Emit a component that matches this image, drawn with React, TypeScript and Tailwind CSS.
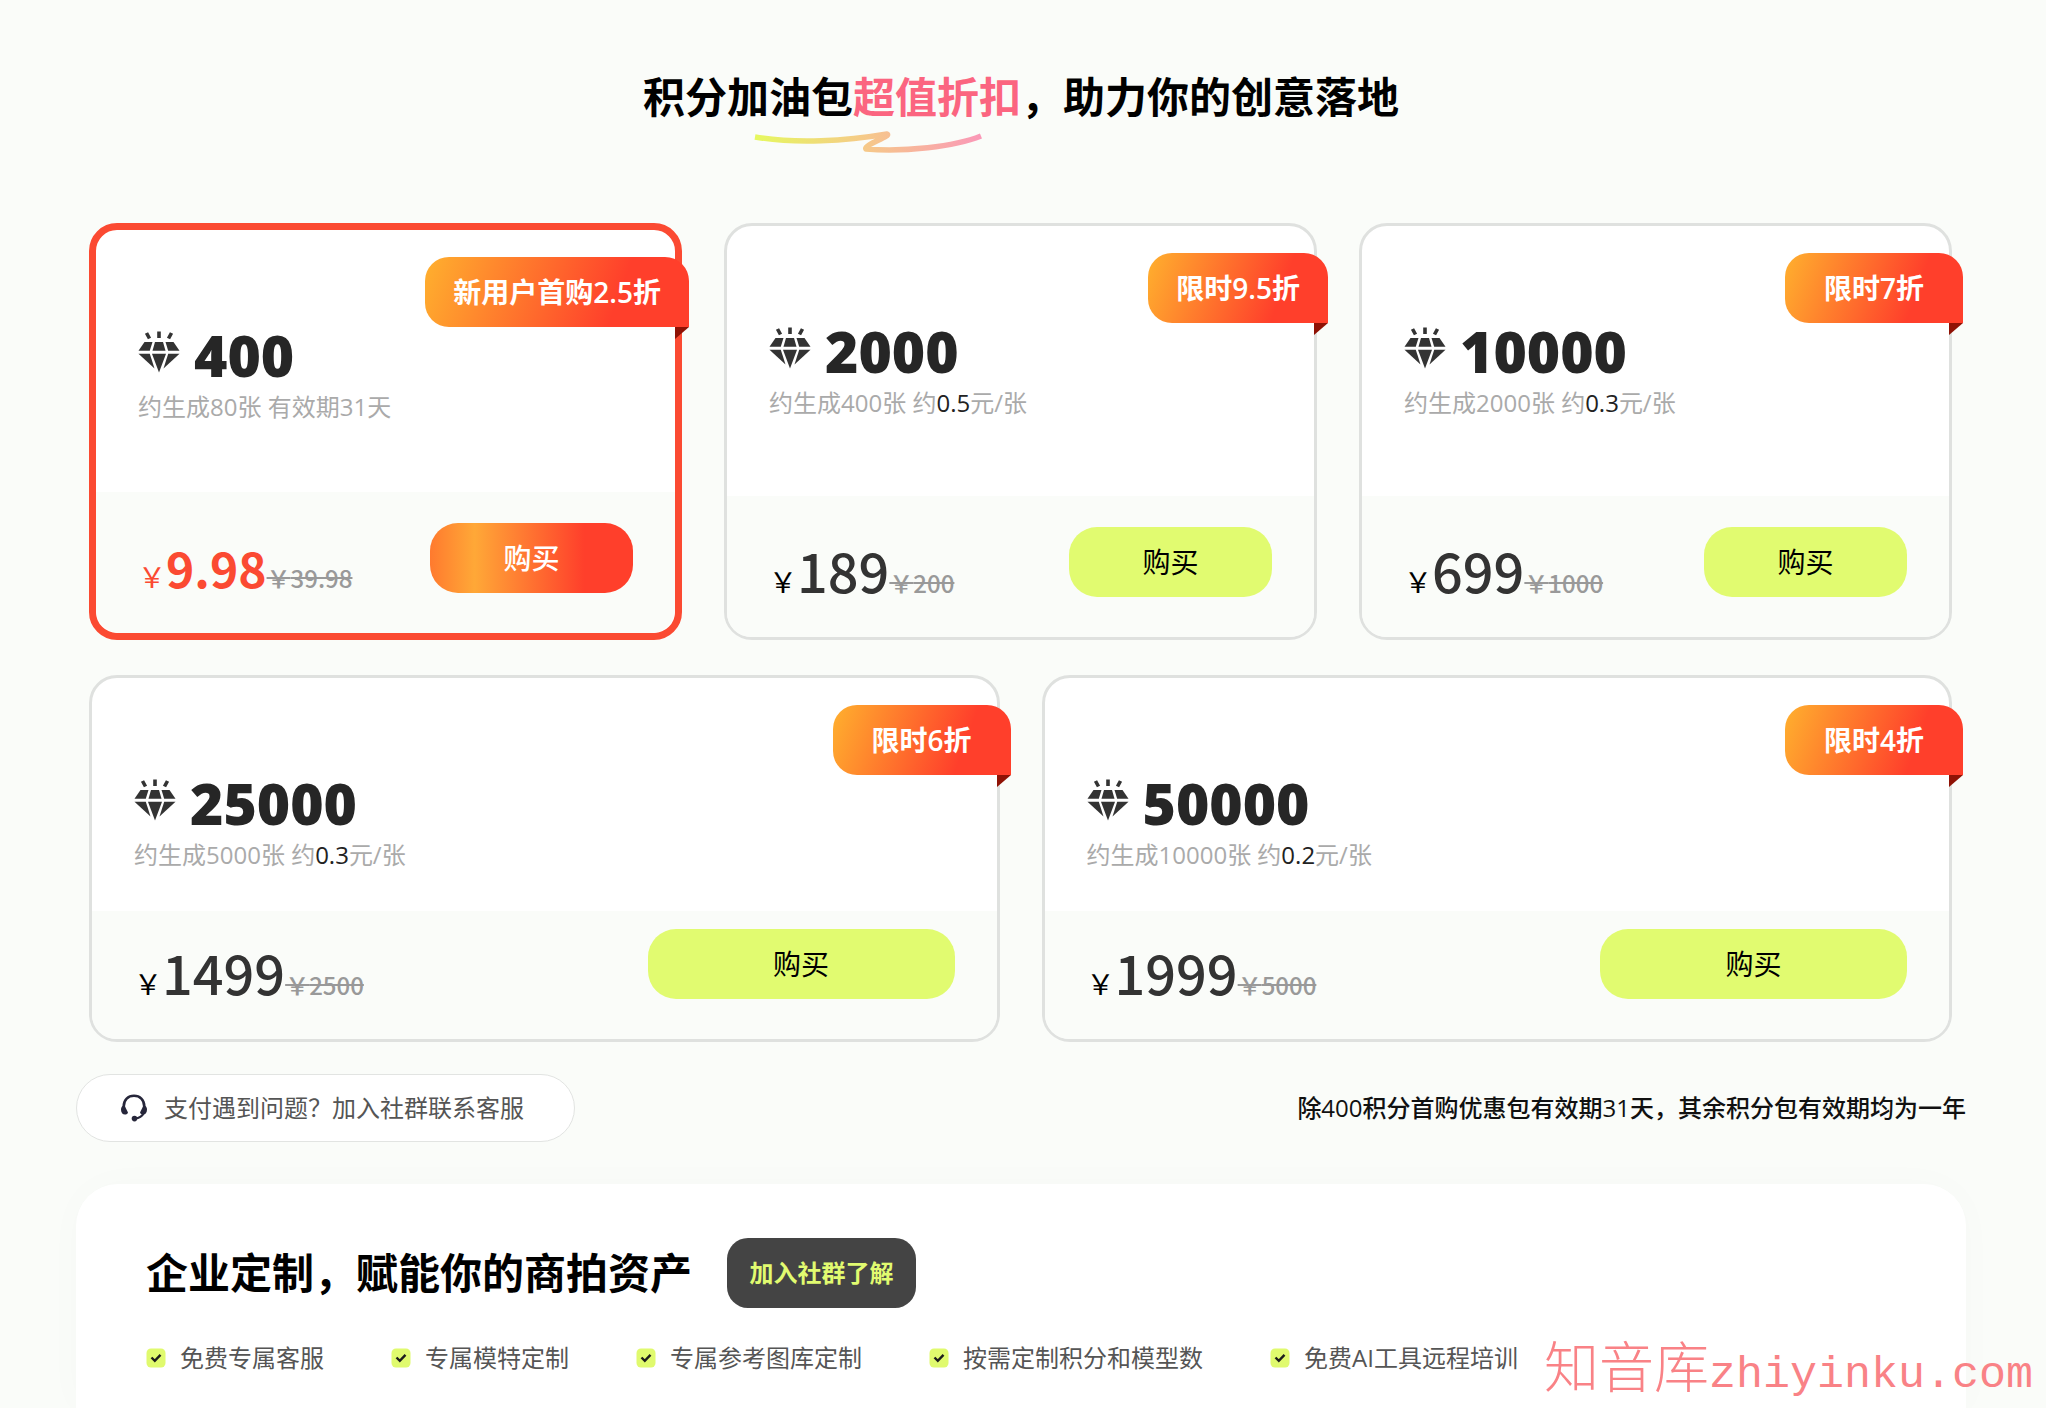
import React from 'react';
import clsx from 'clsx';

interface Pack {
  points: string;
  images: string;
  unitPrice?: string;
  validity?: string;
  price: string;
  oldPrice: string;
  badge: string;
  highlight?: boolean;
}

const topPacks: Pack[] = [
  { points: '400', images: '80', validity: '有效期31天', price: '9.98', oldPrice: '39.98', badge: '新用户首购2.5折', highlight: true },
  { points: '2000', images: '400', unitPrice: '0.5', price: '189', oldPrice: '200', badge: '限时9.5折' },
  { points: '10000', images: '2000', unitPrice: '0.3', price: '699', oldPrice: '1000', badge: '限时7折' },
];

const widePacks: Pack[] = [
  { points: '25000', images: '5000', unitPrice: '0.3', price: '1499', oldPrice: '2500', badge: '限时6折' },
  { points: '50000', images: '10000', unitPrice: '0.2', price: '1999', oldPrice: '5000', badge: '限时4折' },
];

const features = ['免费专属客服', '专属模特定制', '专属参考图库定制', '按需定制积分和模型数', '免费AI工具远程培训'];

const DiamondIcon = () => (
  <svg viewBox="0 0 42 48" className="w-[42px] h-12 shrink-0" fill="#333" aria-hidden="true">
    <path d="M8.5 2L11.5 7.5M21 0.5V7M33.5 2L30.5 7.5" stroke="#333" strokeWidth="3.6" fill="none" />
    <path d="M6.5 11H14.5L11.8 19.7H0.5Z" />
    <path d="M17 11H25L27.5 19.7H14.5Z" />
    <path d="M35.5 11H27.5L30.2 19.7H41.5Z" />
    <path d="M0.5 22.7H11.8L16.5 37.5Z" />
    <path d="M14 22.7H28L21 41.5Z" />
    <path d="M41.5 22.7H30.2L25.5 37.5Z" />
  </svg>
);

const HeadsetIcon = () => (
  <svg viewBox="0 0 28 28" className="w-7 h-7 shrink-0" fill="none" aria-hidden="true">
    <path d="M3.8 14V12C3.8 6 8 1.8 14 1.8S24.2 6 24.2 12V14" stroke="#26263a" strokeWidth="2.6" />
    <path d="M1 15.5C1 13 2.5 11 4.5 11.5L8 18.5C7.5 20 6.5 20.5 5 20.5C2.5 20.5 1 18.5 1 15.5Z" fill="#26263a" />
    <path d="M27 15.5C27 13 25.5 11 23.5 11.5L20 18.5C20.5 20 21.5 20.5 23 20.5C25.5 20.5 27 18.5 27 15.5Z" fill="#26263a" />
    <path d="M23.5 19.5C22 22.5 19.5 24 15 24.5" stroke="#26263a" strokeWidth="2.2" />
    <circle cx="14.5" cy="24.6" r="2.8" fill="#26263a" />
  </svg>
);

const CheckIcon = () => (
  <svg viewBox="0 0 20 20" className="w-5 h-5 shrink-0" fill="none" aria-hidden="true">
    <rect x="0.5" y="0.5" width="19" height="19" rx="4.5" fill="#e0fa6e" />
    <path d="M5.5 9.5L8.8 12.8L14.5 6.8" stroke="#1c1c1c" strokeWidth="2.4" />
  </svg>
);

const PackCard = ({ pack, wide = false }: { pack: Pack; wide?: boolean }) => (
  <article
    className={clsx(
      'relative flex flex-col rounded-[28px] bg-white',
      wide ? 'h-[367px]' : 'h-[417px]',
      pack.highlight ? 'border-[7px] border-[#fb4a32]' : 'border-[3px] border-[#dfe1df]'
    )}
  >
    {/* Discount ribbon */}
    <div className="absolute top-[27px] -right-[14px]">
      <div className="flex h-[70px] min-w-[178px] items-center justify-center rounded-3xl rounded-br-none bg-linear-[110deg,#ffb02e_0%,#ff3f2b_72%] px-7 text-[28px] font-semibold text-white">
        {pack.badge}
      </div>
      <svg viewBox="0 0 14 12" className="ml-auto block w-[14px] h-3" aria-hidden="true">
        <path d="M0 0H14L0 12Z" fill="#8f1205" />
      </svg>
    </div>

    <div className="flex-1 px-[42px] pt-[97px]">
      <div className="flex items-center gap-[14px]">
        <DiamondIcon />
        <h2 className="text-[57px] leading-[56px] font-extrabold text-[#262626]">{pack.points}</h2>
      </div>
      <p className="mt-[6px] text-2xl leading-9 text-[#aaa]">
        约生成{pack.images}张{' '}
        {pack.validity ?? (
          <>
            约<span className="font-medium text-[#222]">{pack.unitPrice}</span>元/张
          </>
        )}
      </p>
    </div>

    <div
      className={clsx(
        'flex items-end justify-between rounded-b-[24px] bg-[#fafcf9] px-[42px] pb-10',
        wide ? 'h-32' : 'h-[141px]'
      )}
    >
      <p className="flex items-baseline whitespace-nowrap font-['Noto_Sans_CJK_SC',sans-serif]">
        <span className={clsx('text-[28px] leading-7', pack.highlight ? 'text-[#fb4a32]' : 'text-black')}>￥</span>
        <span
          className={clsx(
            'leading-[52px]',
            pack.highlight ? 'text-[48px] font-bold text-[#fb4a32]' : 'text-[54px] font-medium text-[#333]'
          )}
        >
          {pack.price}
        </span>
        <del className="text-2xl leading-7 font-medium text-[#999]">￥{pack.oldPrice}</del>
      </p>
      <button
        type="button"
        className={clsx(
          'h-[70px] rounded-[28px] text-[28px] cursor-pointer',
          wide ? 'w-[307px]' : 'w-[203px]',
          pack.highlight
            ? 'bg-linear-[90deg,#ff7a2e_0%,#ffa837_22%,#ff3f2b_76%] font-medium text-white'
            : 'bg-[#e1fb70] text-black'
        )}
      >
        购买
      </button>
    </div>
  </article>
);

const App = () => {
  return (
    <main className="relative min-h-screen overflow-hidden bg-[#fafcf9] pl-[76px] pr-20 pt-[67px] font-['Open_Sans','Noto_Sans_CJK_SC',sans-serif]">
      {/* Title */}
      <header className="flex flex-col items-center">
        <h1 className="text-[42px] leading-[60px] font-bold text-black">
          积分加油包<span className="text-[#fb6580]">超值折扣</span>，助力你的创意落地
        </h1>
        <svg viewBox="0 0 228 24" className="mr-[306px] mt-[3px] h-6 w-[228px]" fill="none" aria-hidden="true">
          <defs>
            <linearGradient id="swash" x1="0" y1="0" x2="228" y2="0" gradientUnits="userSpaceOnUse">
              <stop stopColor="#e6f95f" />
              <stop offset="0.5" stopColor="#f6c88a" />
              <stop offset="1" stopColor="#fa98b8" />
            </linearGradient>
          </defs>
          <path
            d="M1 7C42 14 92 11 133 4C138 6 109 15 112 19C150 22 200 17 227 6"
            stroke="url(#swash)"
            strokeWidth="5.5"
            strokeLinejoin="round"
          />
        </svg>
      </header>

      {/* Packs */}
      <section className="mt-[69px] pl-[13px] pr-[14px]">
        <div className="grid grid-cols-3 gap-[42px]">
          {topPacks.map((pack) => (
            <PackCard key={pack.points} pack={pack} />
          ))}
        </div>
        <div className="mt-[35px] grid grid-cols-2 gap-[42px]">
          {widePacks.map((pack) => (
            <PackCard key={pack.points} pack={pack} wide />
          ))}
        </div>
      </section>

      <div className="mt-8 flex items-center justify-between">
        <a
          href="#community"
          className="flex h-[68px] w-[499px] items-center gap-4 rounded-full border border-[#e2e4e2] bg-white px-[43px] text-2xl text-[#555]"
        >
          <HeadsetIcon />
          支付遇到问题？加入社群联系客服
        </a>
        <p className="text-2xl font-medium text-[#111]">除400积分首购优惠包有效期31天，其余积分包有效期均为一年</p>
      </div>

      {/* Enterprise */}
      <section className="mt-[42px] rounded-t-[42px] bg-white px-[70px] pt-[54px] pb-[34px] shadow-[0_0_40px_rgba(0,0,0,0.02)]">
        <div className="flex items-center gap-[35px]">
          <h2 className="text-[42px] leading-[60px] font-bold text-black">企业定制，赋能你的商拍资产</h2>
          <button
            type="button"
            className="h-[70px] w-[189px] rounded-[21px] bg-[#444] text-2xl font-bold text-[#e1fb70] cursor-pointer"
          >
            加入社群了解
          </button>
        </div>
        <ul className="mt-[34px] flex gap-[67px] text-2xl leading-8 text-[#555]">
          {features.map((feature) => (
            <li key={feature} className="flex items-center gap-[14px] whitespace-nowrap">
              <CheckIcon />
              {feature}
            </li>
          ))}
        </ul>
      </section>

      {/* Watermark */}
      <div className="absolute right-[13px] bottom-0 flex items-baseline whitespace-nowrap text-[#f98286]">
        <span className="text-[55px] leading-[64px] font-light">知音库</span>
        <span className="font-['Liberation_Mono',monospace] text-[45px] leading-[64px]">zhiyinku.com</span>
      </div>
    </main>
  );
};

export default App;
